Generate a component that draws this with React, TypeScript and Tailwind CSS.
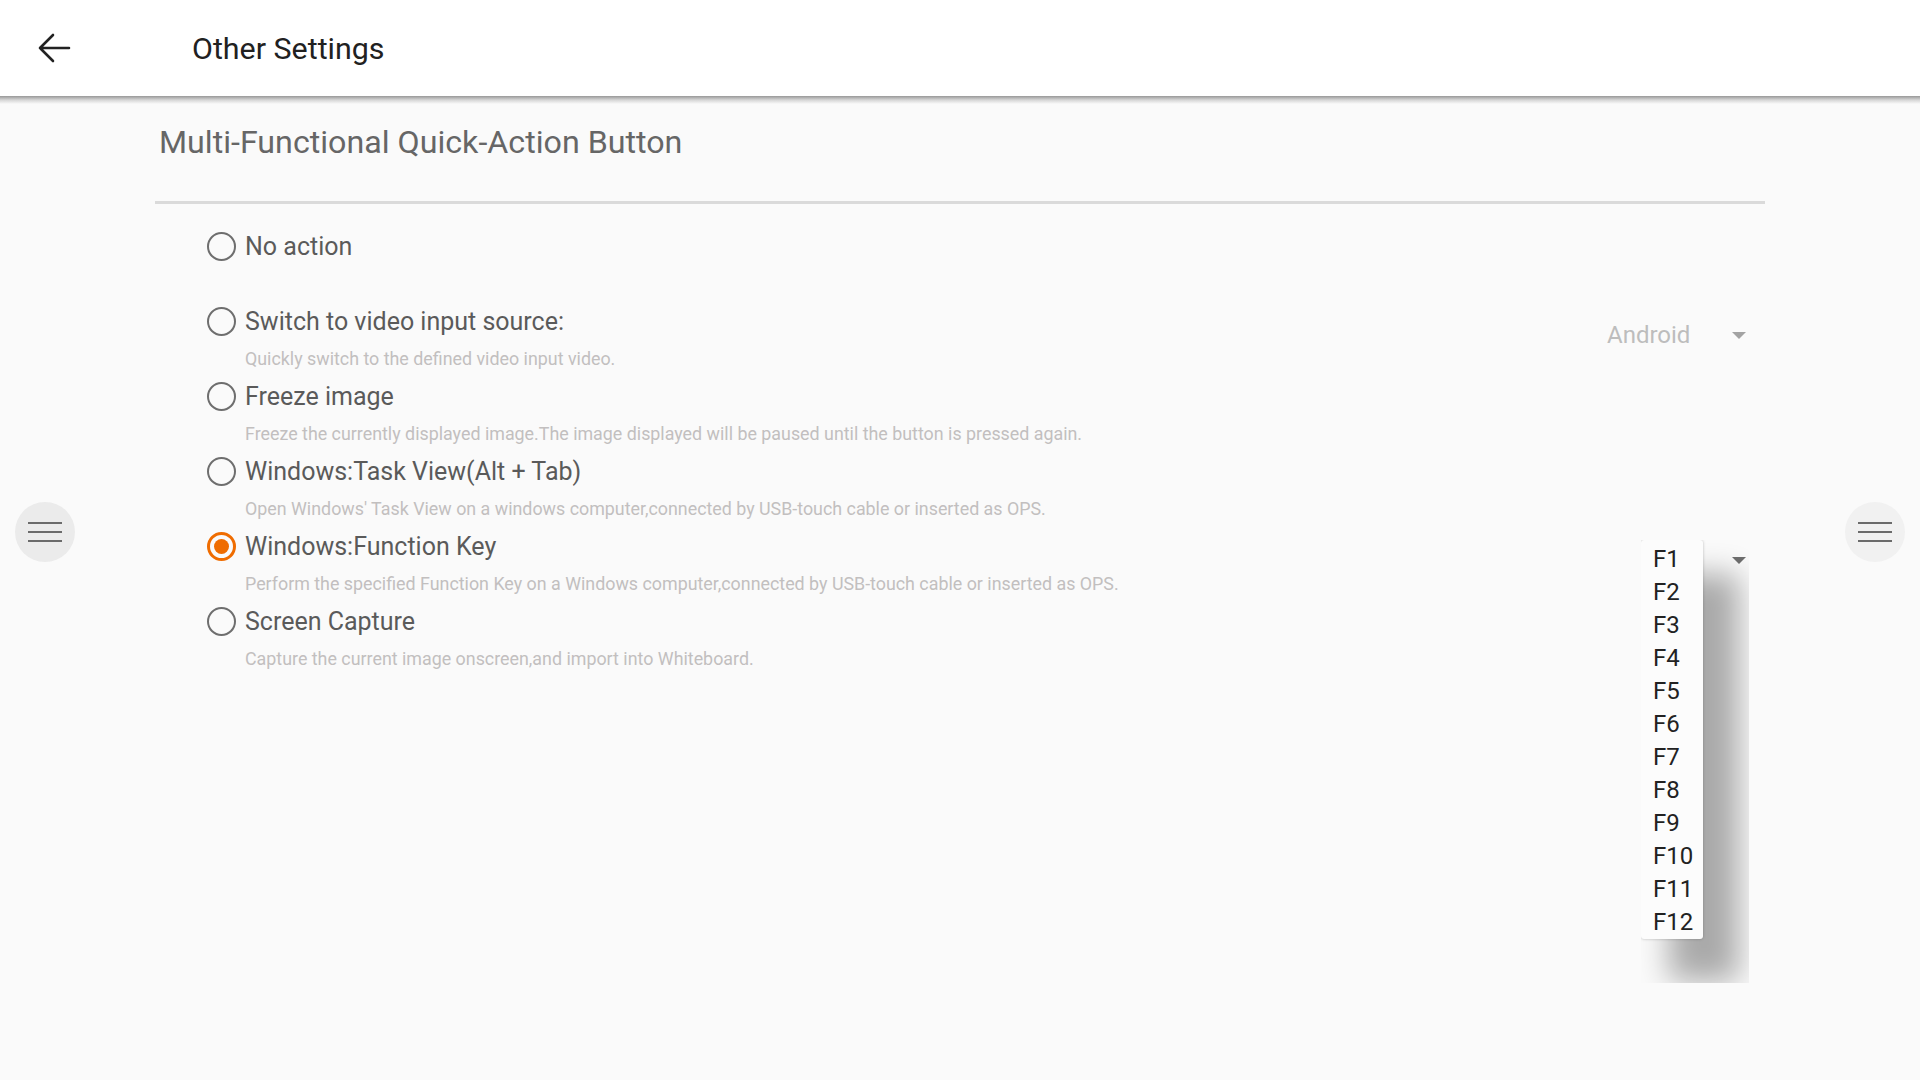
import React from "react"

const options = [
  { label: "No action", desc: "" },
  { label: "Switch to video input source:", desc: "Quickly switch to the defined video input video.", select: "android" },
  { label: "Freeze image", desc: "Freeze the currently displayed image.The image displayed will be paused until the button is pressed again." },
  { label: "Windows:Task View(Alt + Tab)", desc: "Open Windows' Task View on a windows computer,connected by USB-touch cable or inserted as OPS." },
  { label: "Windows:Function Key", desc: "Perform the specified Function Key on a Windows computer,connected by USB-touch cable or inserted as OPS.", select: "fkey", checked: true },
  { label: "Screen Capture", desc: "Capture the current image onscreen,and import into Whiteboard." },
]

const fkeys = ["F1", "F2", "F3", "F4", "F5", "F6", "F7", "F8", "F9", "F10", "F11", "F12"]

function Caret({ dark }: { dark?: boolean }) {
  return (
    <svg width="14" height="7" viewBox="0 0 14 7">
      <path d="M0 0 H14 L7 7 Z" fill={dark ? "#6f6f6f" : "#a3a3a3"} />
    </svg>
  )
}

function Radio({ checked }: { checked?: boolean }) {
  if (checked) {
    return (
      <span className="flex h-[29px] w-[29px] shrink-0 items-center justify-center rounded-full border-[3px] border-[#ef6c00]">
        <span className="h-[15px] w-[15px] rounded-full bg-[#ef6c00]" />
      </span>
    )
  }
  return <span className="h-[29px] w-[29px] shrink-0 rounded-full border-[2.8px] border-[#6e6e6e]" />
}

function SideButton({ right }: { right?: boolean }) {
  return (
    <button
      className={`absolute top-[502px] flex h-[60px] w-[60px] flex-col items-center justify-center gap-[7px] rounded-full ${
        right ? "left-[1845px] bg-[#f1f1f1]" : "left-[15px] bg-[#ebebeb]"
      }`}
    >
      <span className="h-[2px] w-[34px] bg-[#6b6b6b]" />
      <span className="h-[2px] w-[34px] bg-[#6b6b6b]" />
      <span className="h-[2px] w-[34px] bg-[#6b6b6b]" />
    </button>
  )
}

export default function App() {
  return (
    <div className="relative h-[1080px] w-[1920px] overflow-hidden bg-[#fafafa] font-['Roboto','Liberation_Sans',sans-serif]">
      {/* top bar */}
      <header className="flex h-[96px] items-center bg-white">
        <svg width="34" height="32" viewBox="0 0 34 32" className="ml-[37px]">
          <path d="M32 16 H3 M16 3 L3 16 L16 29" fill="none" stroke="#222" strokeWidth="2.6" strokeLinecap="round" strokeLinejoin="round" />
        </svg>
        <h1 className="ml-[121px] pt-[2px] text-[30.4px] leading-[40px] text-[#212121]">Other Settings</h1>
      </header>
      <div className="h-[8px] bg-gradient-to-b from-[#989898] via-[#d6d6d6] to-[#fafafa]" />

      <main className="ml-[155px] w-[1610px]">
        <h2 className="mt-[18px] pl-[4px] text-[32.2px] leading-[40px] text-[#666]">Multi-Functional Quick-Action Button</h2>
        <div className="mt-[39px] h-[3px] bg-[#dadada]" />

        <div className="mt-[22px] pl-[52px]">
          {options.map((o) => (
            <div key={o.label} className="flex h-[75px]">
              <div className="flex-1">
                <div className="flex h-[40px] items-center gap-[9px]">
                  <Radio checked={o.checked} />
                  <span className="pt-[2px] text-[25px] text-[#5a5a5a]">{o.label}</span>
                </div>
                <p className="h-[35px] pl-[38px] text-[17.85px] leading-[35px] text-[#c2bfbf]">{o.desc}</p>
              </div>

              {o.select === "android" && (
                <div className="mr-[15px] mt-[14px] flex h-[40px] w-[150px] items-center justify-between pl-[7px] pr-[4px]">
                  <span className="text-[24px] text-[#bdbdbd]">Android</span>
                  <Caret />
                </div>
              )}

              {o.select === "fkey" && (
                <div className="relative mr-[15px] mt-[14px] flex h-[40px] w-[150px] items-center justify-end pr-[4px]">
                  <Caret dark />
                  <div className="absolute left-[41px] top-0 z-10 h-[443px] w-[108px] overflow-hidden">
                    <ul className="w-[62px] rounded-[3px] bg-[#fcfcfc] pt-[3px] shadow-[0_0_3px_rgba(0,0,0,0.25),32px_38px_30px_4px_rgba(0,0,0,0.32)]">
                      {fkeys.map((k) => (
                        <li key={k} className="h-[33px] pl-[12px] text-[24px] leading-[33px] text-[#222]">
                          {k}
                        </li>
                      ))}
                    </ul>
                  </div>
                </div>
              )}
            </div>
          ))}
        </div>
      </main>

      <SideButton />
      <SideButton right />
    </div>
  )
}
